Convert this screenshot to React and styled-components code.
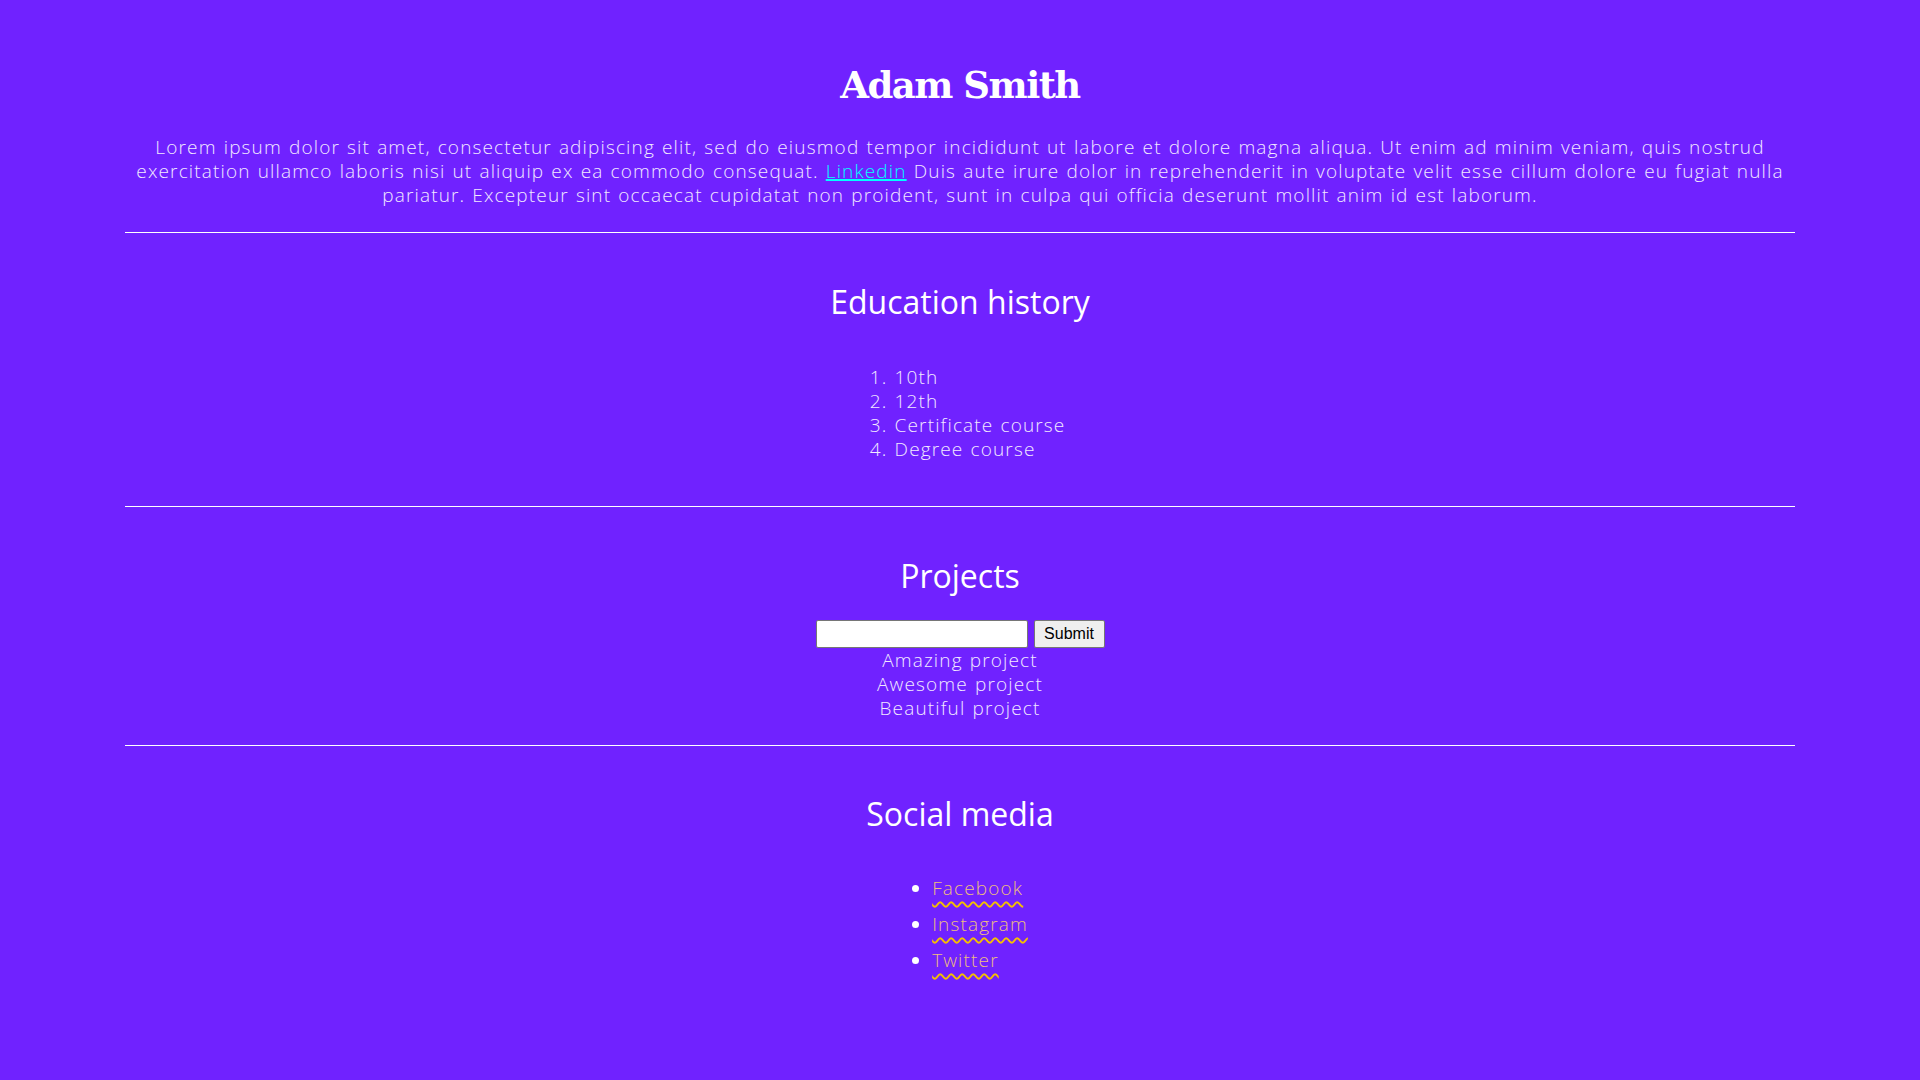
import React from "react";
import styled, { createGlobalStyle } from "styled-components";

const GlobalStyle = createGlobalStyle`
  html, body {
    margin: 0;
    padding: 0;
    background-color: #7022ff;
  }
  body {
    font-family: "Open Sans", "Liberation Sans", sans-serif;
    color: #ffffff;
  }
`;

const Page = styled.div`
  padding: 0 125px 60px;
  text-align: center;
  font-weight: 300;
  font-size: 19px;
  line-height: 24px;
  letter-spacing: 1.15px;
  word-spacing: 1px;
`;

const Name = styled.h1`
  margin: 58px 0 0;
  font-family: "DejaVu Serif", "Liberation Serif", serif;
  font-weight: 700;
  font-size: 37px;
  line-height: 54px;
  letter-spacing: -1.5px;
  word-spacing: 0;
`;

const Intro = styled.p`
  margin: 23px 0 0;
  color: #f2e9ff;
`;

const Linkedin = styled.a`
  color: #00ffff;
  text-decoration: underline;
  text-decoration-thickness: 2px;
`;

const Rule = styled.hr`
  margin: 25px 0 0;
  border: none;
  border-top: 1px solid #ffffff;
  height: 0;
`;

const Section = styled.section`
  padding-top: ${(p) => (p.$tight ? "48px" : "49px")};
`;

const Heading = styled.h2`
  margin: 0;
  font-size: 32px;
  line-height: 40px;
  font-weight: 400;
  letter-spacing: 0;
  word-spacing: 0;
`;

const OrderedList = styled.ol`
  display: inline-block;
  margin: 43px 0 20px;
  padding-left: 40px;
  text-align: left;
  color: #f2e9ff;
`;

const BulletList = styled.ul`
  display: inline-block;
  margin: 42px 0 0;
  padding-left: 40px;
  text-align: left;
  li {
    margin-bottom: 12px;
  }
`;

const SocialLink = styled.a`
  color: #eebd80;
  text-decoration: underline wavy #f6c000;
  text-underline-offset: 6px;
  text-decoration-thickness: 2px;
`;

const SearchForm = styled.form`
  display: flex;
  justify-content: center;
  gap: 6px;
  margin-top: 24px;
`;

const SearchInput = styled.input`
  box-sizing: border-box;
  width: 212px;
  height: 28px;
  border: 1px solid #767676;
  border-radius: 2px;
  background: #ffffff;
  font-size: 16px;
`;

const SubmitButton = styled.button`
  box-sizing: border-box;
  width: 71px;
  height: 28px;
  border: 1px solid #767676;
  border-radius: 2px;
  background: #efefef;
  color: #000000;
  font-family: "Liberation Sans", Arial, sans-serif;
  font-size: 16px;
  letter-spacing: 0;
  word-spacing: 0;
  padding: 0;
`;

const ProjectList = styled.div`
  color: #f2e9ff;
`;

const education = ["10th", "12th", "Certificate course", "Degree course"];
const projects = ["Amazing project", "Awesome project", "Beautiful project"];
const socials = ["Facebook", "Instagram", "Twitter"];

export default function App() {
  return (
    <>
      <GlobalStyle />
      <Page>
        <Name>Adam Smith</Name>
        <Intro>
          Lorem ipsum dolor sit amet, consectetur adipiscing elit, sed do eiusmod tempor incididunt ut labore et dolore
          magna aliqua. Ut enim ad minim veniam, quis nostrud exercitation ullamco laboris nisi ut aliquip ex ea commodo
          consequat. <Linkedin href="#">Linkedin</Linkedin> Duis aute irure dolor in reprehenderit in voluptate velit
          esse cillum dolore eu fugiat nulla pariatur. Excepteur sint occaecat cupidatat non proident, sunt in culpa qui
          officia deserunt mollit anim id est laborum.
        </Intro>
        <Rule />

        <Section>
          <Heading>Education history</Heading>
          <OrderedList>
            {education.map((item) => (
              <li key={item}>{item}</li>
            ))}
          </OrderedList>
        </Section>
        <Rule />

        <Section>
          <Heading>Projects</Heading>
          <SearchForm onSubmit={(e) => e.preventDefault()}>
            <SearchInput type="text" />
            <SubmitButton type="submit">Submit</SubmitButton>
          </SearchForm>
          <ProjectList>
            {projects.map((item) => (
              <div key={item}>{item}</div>
            ))}
          </ProjectList>
        </Section>
        <Rule />

        <Section $tight>
          <Heading>Social media</Heading>
          <div>
            <BulletList>
              {socials.map((item) => (
                <li key={item}>
                  <SocialLink href="#">{item}</SocialLink>
                </li>
              ))}
            </BulletList>
          </div>
        </Section>
      </Page>
    </>
  );
}
